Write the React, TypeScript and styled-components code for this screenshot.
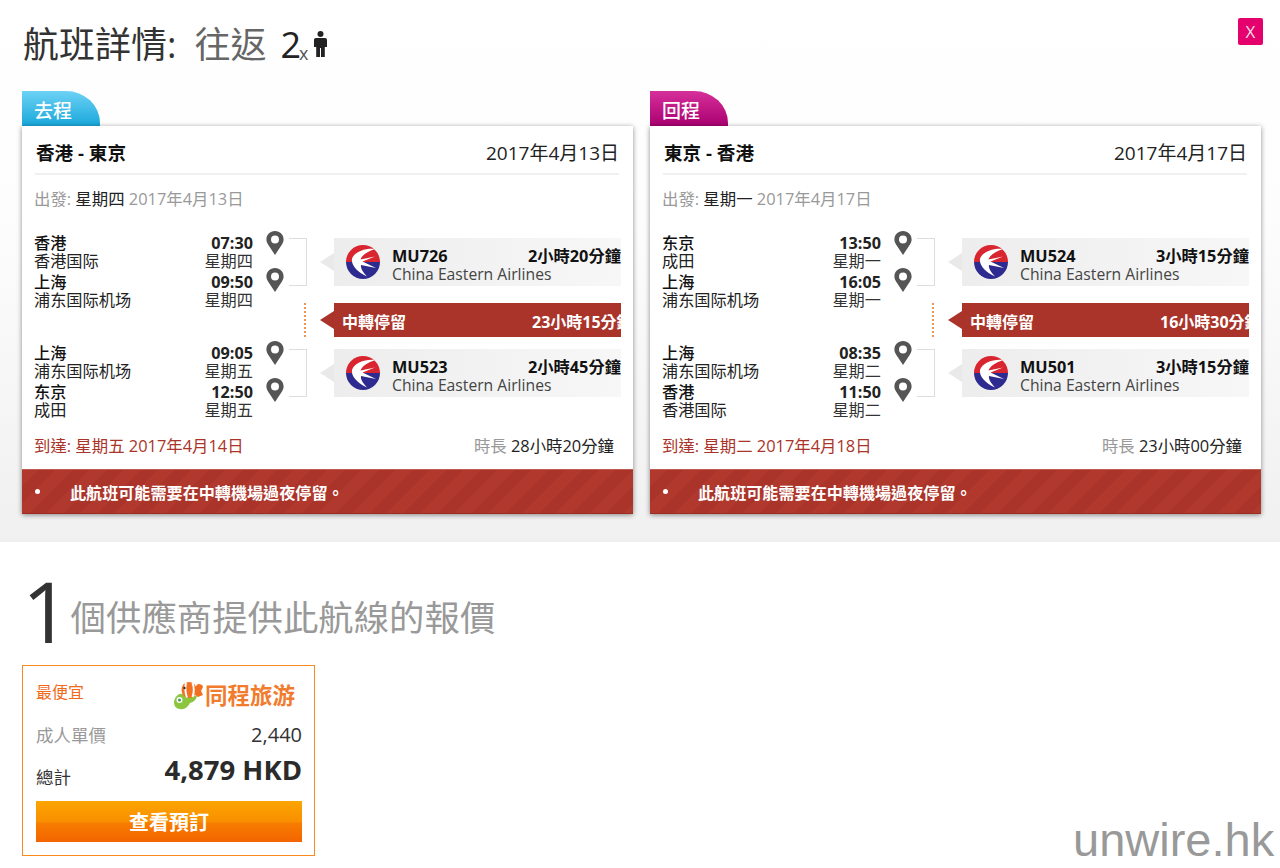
import React from "react";
import styled, { createGlobalStyle } from "styled-components";

const SANS = `"Open Sans", "Noto Sans CJK TC", sans-serif`;

const Global = createGlobalStyle`
  html, body { margin: 0; padding: 0; background: #fff; }
  body { font-family: ${SANS}; color: #333; }
  * { box-sizing: border-box; }
`;

const Page = styled.div`
  position: relative;
  width: 1280px;
  height: 868px;
  overflow: hidden;
`;
const Top = styled.section`
  height: 542px;
  padding: 20px 0 0 22px;
  background: linear-gradient(#fff 0, #fdfdfd 40%, #f0f0f0 100%);
`;
const TitleRow = styled.h1`
  display: flex;
  align-items: center;
  height: 50px;
  margin: 0 0 21px 1px;
  font-size: 36px;
  line-height: 50px;
  font-weight: 400;
  color: #333;
  white-space: nowrap;
`;
const TitleTrip = styled.span`
  color: #666;
  margin-left: 18px;
`;
const TitleCount = styled.span`
  color: #222;
  margin-left: 14px;
`;
const TitleX = styled.span`
  font-size: 18px;
  color: #555;
  align-self: flex-end;
  line-height: 34px;
  margin: 0 4px 0 -2px;
`;
const Close = styled.button`
  position: absolute;
  top: 18px;
  left: 1238px;
  width: 25px;
  height: 27px;
  padding: 0;
  border: 0;
  border-radius: 2px;
  background: #e4006d;
  color: #fbdde9;
  font: 400 17px/27px ${SANS};
`;
const Columns = styled.div`
  display: grid;
  grid-template-columns: 611px 611px;
  column-gap: 17px;
`;
const Tab = styled.div<{ $from: string; $to: string }>`
  width: 78px;
  height: 35px;
  padding-left: 12px;
  border-top-right-radius: 34px 32px;
  background: linear-gradient(${(p) => p.$from}, ${(p) => p.$to});
  color: #fff;
  font-size: 19px;
  line-height: 40px;
  font-weight: 500;
`;
const Card = styled.article`
  height: 388px;
  background: #fff;
  box-shadow: 0 1px 5px rgba(0, 0, 0, 0.45);
  display: flex;
  flex-direction: column;
`;
const CardBody = styled.div`
  flex: 1;
  padding: 0 14px 0 12px;
`;
const CardHead = styled.header`
  display: flex;
  justify-content: space-between;
  align-items: center;
  height: 49px;
  margin-left: 1px;
  padding: 4px 0 0 1px;
  border-bottom: 2px solid #f0f0f0;
`;
const Route = styled.strong`
  font-size: 18.6px;
  font-weight: 700;
  color: #111;
`;
const HeadDate = styled.span`
  font-size: 19px;
  color: #222;
`;
const Depart = styled.div`
  height: 59px;
  padding-top: 13px;
  font-size: 16.4px;
  line-height: 22px;
  color: #999;
`;
const Dark = styled.span`
  color: #222;
`;
const Itinerary = styled.div`
  display: flex;
  height: 190px;
  margin-right: -2px;
`;
const StopsColumn = styled.div`
  width: 255px;
  display: flex;
  flex-direction: column;
  gap: 32px;
  flex: none;
`;
const Leg = styled.div`
  display: flex;
  flex-direction: column;
  gap: 3px;
  height: 78px;
`;
const Stop = styled.div`
  display: grid;
  grid-template-columns: 1fr auto;
  grid-auto-rows: 18px;
  font-size: 16.2px;
  line-height: 18px;
  color: #222;
  width: 219px;
`;
const Time = styled.strong`
  text-align: right;
  font-weight: 700;
  color: #222;
`;
const Day = styled.span`
  text-align: right;
  color: #333;
`;
const City = styled.span`
  font-weight: 500;
  color: #111;
`;
const PinsColumn = styled.div`
  position: relative;
  width: 0;
`;
const Pin = styled.svg<{ $top: number }>`
  position: absolute;
  left: -23px;
  width: 18px;
  height: 24px;
  top: ${(p) => p.$top}px;
`;
const Side = styled.div`
  flex: 1;
  display: flex;
  flex-direction: column;
  padding-top: 4px;
`;
const SideRow = styled.div<{ $h: number; $mb: number }>`
  display: flex;
  height: ${(p) => p.$h}px;
  margin-bottom: ${(p) => p.$mb}px;
  width: 332px;
`;
const Bracket = styled.div`
  width: 18px;
  flex: none;
  border: 1px solid #ddd;
  border-left: 0;
`;
const Dots = styled.div`
  width: 17px;
  flex: none;
  border-right: 2px dotted #f0955a;
  margin-right: 1px;
`;
const Notch = styled.div<{ $color: string }>`
  width: 0;
  height: 0;
  flex: none;
  margin: auto 0 auto 13px;
  border-style: solid;
  border-width: 9px 14px 9px 0;
  border-color: transparent ${(p) => p.$color} transparent transparent;
`;
const Flight = styled.div`
  flex: 1;
  min-width: 0;
  display: flex;
  align-items: center;
  gap: 12px;
  padding-left: 12px;
  background: linear-gradient(90deg, #ededed, #f7f7f7);
`;
const FlightText = styled.div`
  flex: 1;
  line-height: 18px;
  padding-top: 5px;
`;
const FlightTop = styled.div`
  display: flex;
  justify-content: space-between;
  font-size: 16.3px;
  font-weight: 700;
  color: #111;
  white-space: nowrap;
`;
const Carrier = styled.div`
  font-size: 15.7px;
  color: #444;
  white-space: nowrap;
`;
const Layover = styled.div`
  flex: 1;
  min-width: 0;
  display: flex;
  align-items: center;
  padding: 1px 0 0 8px;
  background: #aa3429;
  color: #fff;
  font-size: 16px;
  font-weight: 700;
  white-space: nowrap;
`;
const LayoverLabel = styled.span`
  flex: 0 0 190px;
`;
const CardFoot = styled.div`
  display: flex;
  justify-content: space-between;
  align-items: center;
  height: 32px;
  margin-top: 5px;
  padding-right: 5px;
  font-size: 16.4px;
`;
const Arrive = styled.span`
  color: #aa3429;
`;
const Duration = styled.span`
  color: #999;
`;
const Warn = styled.div`
  height: 45px;
  display: flex;
  align-items: center;
  padding-left: 13px;
  color: #fff;
  font-size: 16.1px;
  font-weight: 700;
  background: repeating-linear-gradient(135deg, #b0382d 0 12px, #aa3429 12px 24px);
  border-top: 1px solid #bf5b50;
  border-bottom: 1px solid #9d2d22;
`;
const Bullet = styled.i`
  width: 5px;
  height: 5px;
  border-radius: 50%;
  background: #fff;
  margin-right: 30px;
`;
const Lower = styled.section`
  padding: 0 0 0 22px;
`;
const Offer = styled.h2`
  display: flex;
  align-items: center;
  height: 123px;
  margin: 0;
  font-weight: 400;
  color: #999;
  font-size: 35.4px;
  white-space: nowrap;
`;
const OfferCount = styled.span`
  position: relative;
  top: 7px;
  font-size: 85px;
  font-weight: 500;
  color: #333;
  line-height: 123px;
`;
const OfferText = styled.span`
  position: relative;
  top: 12px;
`;
const Quote = styled.div`
  width: 293px;
  height: 191px;
  border: 1.5px solid #fb8a1e;
  padding: 0 12px 0 13px;
  display: flex;
  flex-direction: column;
`;
const QuoteTop = styled.div`
  display: flex;
  justify-content: space-between;
  align-items: center;
  height: 51px;
  padding-top: 2px;
`;
const Cheap = styled.span`
  color: #ef6a1a;
  font-size: 16px;
  margin-top: -4px;
`;
const Brand = styled.div`
  display: flex;
  align-items: center;
  color: #f27c2e;
  font-size: 22.5px;
  font-weight: 700;
  line-height: 30px;
  margin-right: 7px;
  padding-top: 6px;
`;
const PriceRow = styled.div<{ $h: number; $color: string }>`
  display: flex;
  justify-content: space-between;
  align-items: center;
  height: ${(p) => p.$h}px;
  font-size: 17.5px;
  color: ${(p) => p.$color};
`;
const Unit = styled.span`
  font-size: 20px;
  color: #333;
`;
const Total = styled.span`
  font-size: 27.5px;
  font-weight: 700;
  color: #2b2b2b;
  margin-top: -8px;
`;
const TotalLabel = styled.span`
  margin-top: 7px;
`;
const Book = styled.button`
  height: 41px;
  margin-top: 6px;
  border: 0;
  color: #fff;
  font: 700 20px/41px ${SANS};
  background: linear-gradient(#fca500 0, #f98f00 50%, #f77c00 55%, #f46400 100%);
`;
const Watermark = styled.div`
  position: absolute;
  left: 1073px;
  top: 811px;
  font: 400 47px/58px "Liberation Sans", Arial, sans-serif;
  color: #999;
`;

const PersonIcon = () => (
  <svg width="15" height="26" viewBox="0 0 15 26" style={{ marginTop: -2 }}>
    <circle cx="7.5" cy="3" r="3" fill="#222" />
    <path d="M3 7h9c1.400 0 2 .8 2 2v7h-2.200v10H8V17H7v9H3.200V16H1V9c0-1.200.6-2 2-2z" fill="#222" />
  </svg>
);

const PinIcon = ({ top }: { top: number }) => (
  <Pin $top={top} viewBox="0 0 18 24">
    <path
      fillRule="evenodd"
      d="M9 0C4 0 .4 3.700.4 8.400c0 2 .8 3.800 1.800 5.300L9 24l6.800-10.300c1-1.500 1.800-3.300 1.800-5.300C17.600 3.700 14 0 9 0zm0 4.500a4 4 0 1 1 0 8 4 4 0 0 1 0-8z"
      fill="#555"
    />
  </Pin>
);

const AirlineLogo = () => (
  <svg width="34" height="34" viewBox="0 0 34 34" style={{ flex: "none" }}>
    <path d="M0 17A17 17 0 0 1 34 17z" fill="#d9252f" />
    <path d="M0 17A17 17 0 0 0 34 17z" fill="#2d2b8f" />
    <path
      d="M29 4C19 3 8 7 6 14 5 20 11 27 21 31.500 16 26 14.500 23 15 20L30 23 16.500 16.500 29 11.500 14.500 14.500C16 10 21 7 29 4z"
      fill="#fff"
    />
  </svg>
);

const FishLogo = () => (
  <svg width="31" height="31" viewBox="0 0 31 31">
    <path d="M0 22C1 16 5 13 9 14c2 4 7 4 14 1 0 4-3 7-7 8-2 4-6 7-10 6-4 0-6-3-6-7z" fill="#8cc63f" />
    <circle cx="5.500" cy="20" r="3" fill="#fff" />
    <circle cx="5.500" cy="20" r="1.500" fill="#3a9a5a" />
    <path d="M20 8l4-4c3 0 5 1 5 3l-2 4 2 4-5 2-4-3z" fill="#f37021" />
    <ellipse cx="15" cy="10" rx="7.500" ry="8" fill="#f37021" />
    <path d="M12 2.500c-1 5-1 10 1 15M18.500 3c1.500 4 1.500 10 0 14" stroke="#fff" strokeWidth="2" fill="none" />
    <circle cx="10.500" cy="8" r="1.200" fill="#333" />
  </svg>
);

type StopData = { city: string; port: string; time: string; day: string };
type TripData = {
  tab: string;
  from: string;
  to: string;
  route: string;
  date: string;
  weekday: string;
  departDate: string;
  first: [StopData, StopData];
  second: [StopData, StopData];
  flights: { code: string; dur: string }[];
  layover: string;
  arrive: string;
  duration: string;
};

const trips: TripData[] = [
  {
    tab: "去程",
    from: "#6dd2f5",
    to: "#18a7da",
    route: "香港 - 東京",
    date: "2017年4月13日",
    weekday: "星期四",
    departDate: "2017年4月13日",
    first: [
      { city: "香港", port: "香港国际", time: "07:30", day: "星期四" },
      { city: "上海", port: "浦东国际机场", time: "09:50", day: "星期四" },
    ],
    second: [
      { city: "上海", port: "浦东国际机场", time: "09:05", day: "星期五" },
      { city: "东京", port: "成田", time: "12:50", day: "星期五" },
    ],
    flights: [
      { code: "MU726", dur: "2小時20分鐘" },
      { code: "MU523", dur: "2小時45分鐘" },
    ],
    layover: "23小時15分鐘",
    arrive: "到達: 星期五 2017年4月14日",
    duration: "28小時20分鐘",
  },
  {
    tab: "回程",
    from: "#d6309b",
    to: "#a9006f",
    route: "東京 - 香港",
    date: "2017年4月17日",
    weekday: "星期一",
    departDate: "2017年4月17日",
    first: [
      { city: "东京", port: "成田", time: "13:50", day: "星期一" },
      { city: "上海", port: "浦东国际机场", time: "16:05", day: "星期一" },
    ],
    second: [
      { city: "上海", port: "浦东国际机场", time: "08:35", day: "星期二" },
      { city: "香港", port: "香港国际", time: "11:50", day: "星期二" },
    ],
    flights: [
      { code: "MU524", dur: "3小時15分鐘" },
      { code: "MU501", dur: "3小時15分鐘" },
    ],
    layover: "16小時30分鐘",
    arrive: "到達: 星期二 2017年4月18日",
    duration: "23小時00分鐘",
  },
];

const StopBlock = ({ s }: { s: StopData }) => (
  <Stop>
    <City>{s.city}</City>
    <Time>{s.time}</Time>
    <span>{s.port}</span>
    <Day>{s.day}</Day>
  </Stop>
);

const FlightRow = ({ code, dur, mb }: { code: string; dur: string; mb: number }) => (
  <SideRow $h={48} $mb={mb}>
    <Bracket />
    <Notch $color="#e9e9e9" />
    <Flight>
      <AirlineLogo />
      <FlightText>
        <FlightTop>
          <span>{code}</span>
          <span>{dur}</span>
        </FlightTop>
        <Carrier>China Eastern Airlines</Carrier>
      </FlightText>
    </Flight>
  </SideRow>
);

const Trip = ({ t }: { t: TripData }) => (
  <div>
    <Tab $from={t.from} $to={t.to}>{t.tab}</Tab>
    <Card>
      <CardBody>
        <CardHead>
          <Route>{t.route}</Route>
          <HeadDate>{t.date}</HeadDate>
        </CardHead>
        <Depart>
          出發: <Dark>{t.weekday}</Dark> {t.departDate}
        </Depart>
        <Itinerary>
          <StopsColumn>
            <Leg>
              <StopBlock s={t.first[0]} />
              <StopBlock s={t.first[1]} />
            </Leg>
            <Leg>
              <StopBlock s={t.second[0]} />
              <StopBlock s={t.second[1]} />
            </Leg>
          </StopsColumn>
          <PinsColumn>
            <PinIcon top={-3} />
            <PinIcon top={34} />
            <PinIcon top={107} />
            <PinIcon top={144} />
          </PinsColumn>
          <Side>
            <FlightRow code={t.flights[0].code} dur={t.flights[0].dur} mb={17} />
            <SideRow $h={34} $mb={12}>
              <Dots />
              <Notch $color="#aa3429" />
              <Layover>
                <LayoverLabel>中轉停留</LayoverLabel>
                <span>{t.layover}</span>
              </Layover>
            </SideRow>
            <FlightRow code={t.flights[1].code} dur={t.flights[1].dur} mb={0} />
          </Side>
        </Itinerary>
        <CardFoot>
          <Arrive>{t.arrive}</Arrive>
          <Duration>
            時長 <Dark>{t.duration}</Dark>
          </Duration>
        </CardFoot>
      </CardBody>
      <Warn>
        <Bullet />
        此航班可能需要在中轉機場過夜停留。
      </Warn>
    </Card>
  </div>
);

export default function App() {
  return (
    <Page>
      <Global />
      <Top>
        <TitleRow>
          航班詳情:
          <TitleTrip>往返</TitleTrip>
          <TitleCount>2</TitleCount>
          <TitleX>x</TitleX>
          <PersonIcon />
        </TitleRow>
        <Close>X</Close>
        <Columns>
          {trips.map((t) => (
            <Trip key={t.tab} t={t} />
          ))}
        </Columns>
      </Top>
      <Lower>
        <Offer>
          <OfferCount>1</OfferCount>
          <OfferText>個供應商提供此航線的報價</OfferText>
        </Offer>
        <Quote>
          <QuoteTop>
            <Cheap>最便宜</Cheap>
            <Brand>
              <FishLogo />
              同程旅游
            </Brand>
          </QuoteTop>
          <PriceRow $h={34} $color="#999">
            成人單價
            <Unit>2,440</Unit>
          </PriceRow>
          <PriceRow $h={44} $color="#333">
            <TotalLabel>總計</TotalLabel>
            <Total>4,879 HKD</Total>
          </PriceRow>
          <Book>查看預訂</Book>
        </Quote>
      </Lower>
      <Watermark>unwire.hk</Watermark>
    </Page>
  );
}
